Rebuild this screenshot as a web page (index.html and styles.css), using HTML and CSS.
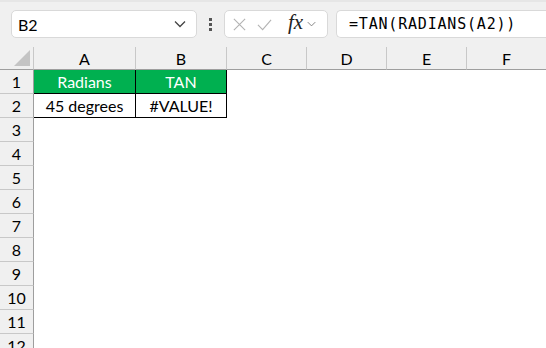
FILE: index.html
```html
<!DOCTYPE html>
<html lang="en">
<head>
    <meta charset="UTF-8">
    <title>Book1 - Excel</title>
    <link rel="stylesheet" href="styles.css">
</head>
<body>

    <!-- Formula bar -->
    <div class="toolbar">
        <div class="name-box">
            <span>B2</span>
            <svg class="chev" viewBox="0 0 12 8"><path d="M1 1.5l5 5 5-5" fill="none" stroke="#444" stroke-width="1.3"/></svg>
        </div>
        <div class="dots"><i></i><i></i><i></i></div>
        <div class="fx-box">
            <svg class="ico" viewBox="0 0 16 16"><path d="M2 2l12 12M14 2L2 14" stroke="#b3b3b3" stroke-width="1.2" fill="none"/></svg>
            <svg class="ico" viewBox="0 0 16 16"><path d="M1 8.5l5 5L15 3" stroke="#b3b3b3" stroke-width="1.2" fill="none"/></svg>
            <span class="fx">fx</span>
            <svg class="chev small" viewBox="0 0 12 8"><path d="M1 1.5l5 5 5-5" fill="none" stroke="#777" stroke-width="1.2"/></svg>
        </div>
        <div class="formula">=TAN(RADIANS(A2))</div>
    </div>

    <!-- Sheet -->
    <div class="sheet">
        <div class="corner"><span class="tri"></span></div>
        <div class="col-h">A</div>
        <div class="col-h">B</div>
        <div class="col-h">C</div>
        <div class="col-h">D</div>
        <div class="col-h">E</div>
        <div class="col-h last">F</div>

        <div class="row-h">1</div>
        <div class="cell green bl">Radians</div>
        <div class="cell green bl">TAN</div>
        <div class="cell"></div><div class="cell"></div><div class="cell"></div><div class="cell"></div>

        <div class="row-h">2</div>
        <div class="cell bl">45 degrees</div>
        <div class="cell bl">#VALUE!</div>
        <div class="cell"></div><div class="cell"></div><div class="cell"></div><div class="cell"></div>

        <div class="row-h">3</div><div class="cell span"></div>
        <div class="row-h">4</div><div class="cell span"></div>
        <div class="row-h">5</div><div class="cell span"></div>
        <div class="row-h">6</div><div class="cell span"></div>
        <div class="row-h">7</div><div class="cell span"></div>
        <div class="row-h">8</div><div class="cell span"></div>
        <div class="row-h">9</div><div class="cell span"></div>
        <div class="row-h">10</div><div class="cell span"></div>
        <div class="row-h">11</div><div class="cell span"></div>
        <div class="row-h">12</div><div class="cell span"></div>
    </div>

</body>
</html>
```

FILE: styles.css
```css
body {
    margin: 0;
    padding: 0;
    width: 546px;
    height: 348px;
    overflow: hidden;
    background-color: #f0f0f0;
    font-family: "Lato", "Open Sans", sans-serif;
    color: #000;
}

/* Top bar */
.toolbar {
    height: 47px;
    border-top: 2px solid #e6e6e6;
    display: flex;
    align-items: flex-start;
    padding-top: 8px;
    box-sizing: border-box;
}

.name-box {
    margin-left: 11px;
    width: 186px;
    height: 28px;
    box-sizing: border-box;
    background-color: white;
    border: 1px solid #d9d9d9;
    border-radius: 5px;
    display: flex;
    align-items: center;
    justify-content: space-between;
    padding: 0 10px 0 6px;
    font-size: 16px;
}

.chev {
    width: 12px;
    height: 8px;
}

.chev.small {
    width: 9px;
    height: 6px;
    margin-left: 4px;
}

.dots {
    width: 27px;
    height: 28px;
    display: flex;
    flex-direction: column;
    align-items: center;
    justify-content: center;
    gap: 2px;
}

.dots i {
    width: 3px;
    height: 3px;
    background-color: #555;
}

.fx-box {
    width: 104px;
    height: 28px;
    box-sizing: border-box;
    background-color: white;
    border: 1px solid #d9d9d9;
    border-radius: 5px;
    display: flex;
    align-items: center;
    padding-left: 7px;
}

.ico {
    width: 15px;
    height: 15px;
    margin-right: 10px;
}

.fx {
    font-family: "Liberation Serif", serif;
    font-style: italic;
    font-size: 21px;
    color: #222;
    margin-left: 6px;
    line-height: 1;
    margin-top: -3px;
}

.formula {
    margin-left: 8px;
    flex: 1;
    height: 28px;
    box-sizing: border-box;
    background-color: white;
    border: 1px solid #d9d9d9;
    border-right: none;
    border-radius: 5px 0 0 5px;
    padding-left: 12px;
    display: flex;
    align-items: center;
    font-family: "DejaVu Sans Mono", monospace;
    font-size: 15px;
    letter-spacing: 0.8px;
}

/* Grid */
.sheet {
    display: grid;
    grid-template-columns: 34px 102px 91px 80px 80px 80px 79px;
    grid-template-rows: 23px repeat(12, 24px);
    background-color: white;
    font-size: 16px;
}

.corner {
    background-color: #f0f0f0;
    border-right: 1px solid #c8c8c8;
    border-bottom: 1px solid #9e9e9e;
    display: flex;
    align-items: flex-end;
    justify-content: flex-end;
    padding: 0 3px 3px 0;
}

.tri {
    width: 0;
    height: 0;
    border-left: 16px solid transparent;
    border-bottom: 16px solid #c4c4c4;
}

.col-h {
    background-color: #f0f0f0;
    border-right: 1px solid #c8c8c8;
    border-bottom: 1px solid #9e9e9e;
    text-align: center;
    line-height: 23px;
}

.col-h.last {
    border-right: none;
}

.row-h {
    background-color: #f0f0f0;
    border-right: 1px solid #9e9e9e;
    border-bottom: 1px solid #c8c8c8;
    text-align: center;
    line-height: 23px;
}

.cell {
    line-height: 23px;
    text-align: center;
}

.cell.span {
    grid-column: span 6;
}

.cell.bl {
    border-right: 1px solid #000;
    border-bottom: 1px solid #000;
}

.green {
    background-color: #00b050;
    color: white;
}
```
